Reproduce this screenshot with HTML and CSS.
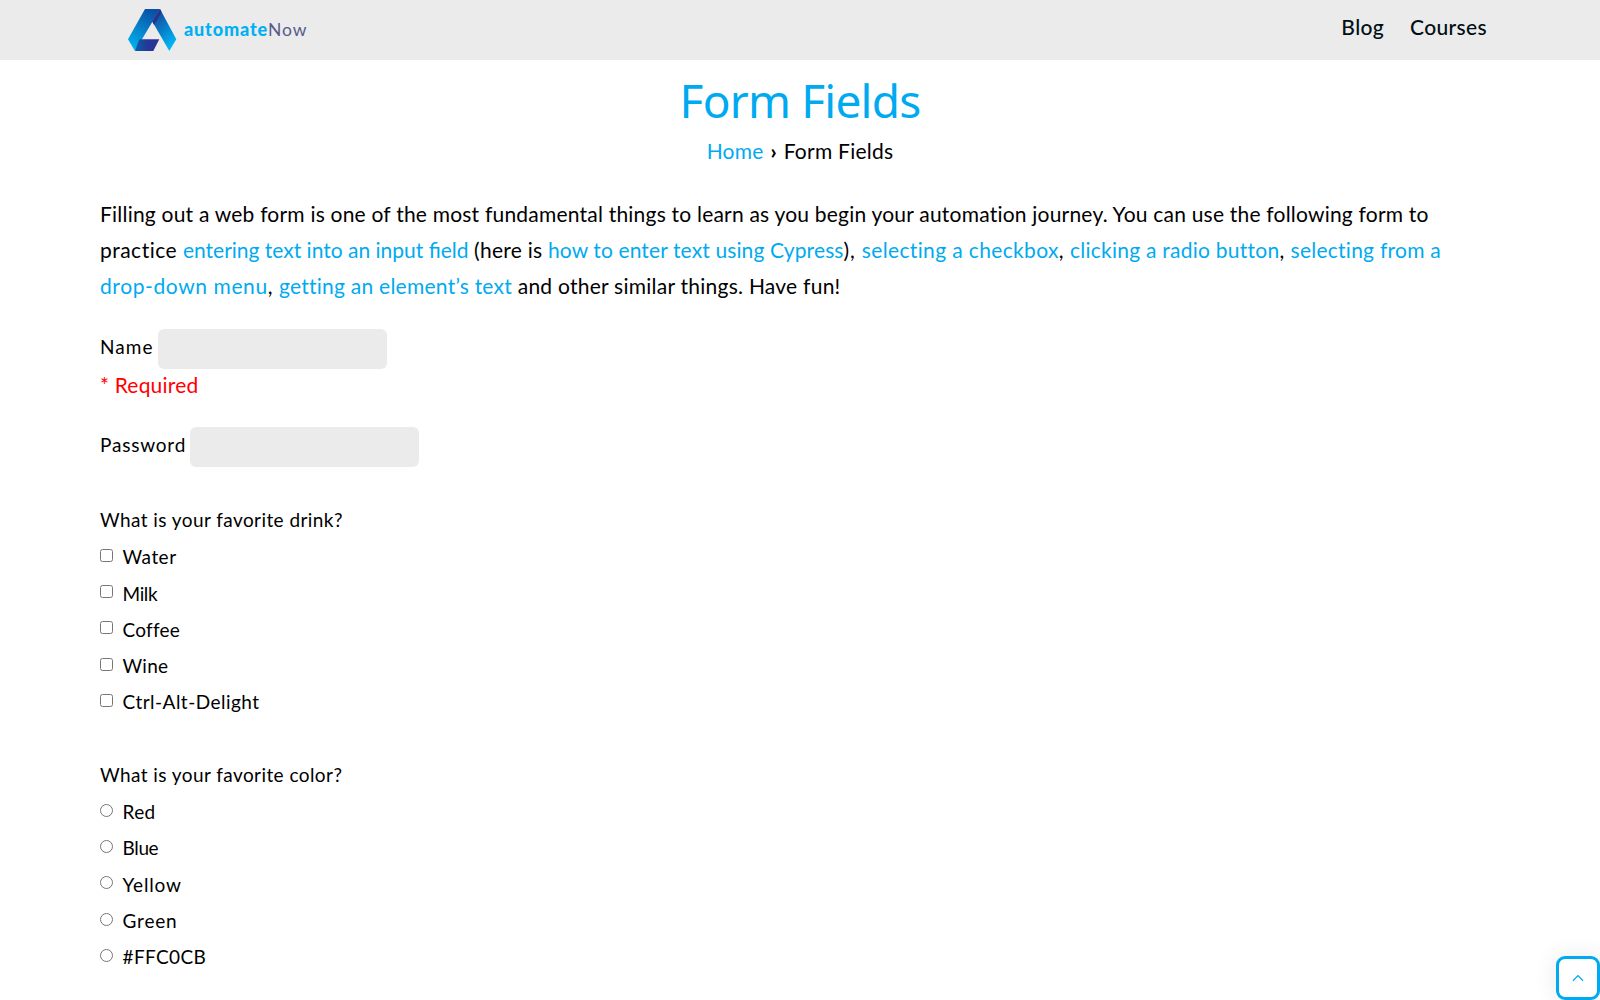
FILE: index.html
```
<!DOCTYPE html>
<html lang="en">
<head>
<meta charset="utf-8">
<title>Form Fields | automateNow</title>
<link rel="stylesheet" href="styles.css">
</head>
<body>
<header class="site-header">
  <a class="logo" href="#">
    <svg class="logo-mark" width="50" height="44" viewBox="0 0 50 44" aria-hidden="true">
      <defs>
        <linearGradient id="left" x1="0.7" y1="0" x2="0.2" y2="1"><stop offset="0" stop-color="#0b4fa3"/><stop offset="1" stop-color="#00b4f2"/></linearGradient>
        <linearGradient id="right" x1="0.2" y1="0" x2="0.7" y2="1"><stop offset="0" stop-color="#1c3f98"/><stop offset=".45" stop-color="#0878c4"/><stop offset="1" stop-color="#00bdfa"/></linearGradient>
        <linearGradient id="base" x1="0" y1="0" x2="1" y2="0"><stop offset="0" stop-color="#075fa9"/><stop offset=".5" stop-color="#24389a"/><stop offset="1" stop-color="#2b3291"/></linearGradient>
      </defs>
      <path fill="url(#right)" d="M33 1 49.3 31.3 42.3 43 25.3 13.5z"/>
      <path fill="url(#left)" d="M18 1H33L8 43 1 31.3z"/>
      <path fill="#26328c" d="M33 1 34.5 4 27 17 25.3 13.5z"/>
      <path fill="url(#base)" d="M12.3 31.3H32.3L26.3 43H8z"/>
    </svg>
    <span class="logo-bold">automate</span><span class="logo-light">Now</span>
  </a>
  <nav class="menu"><a href="#">Blog</a><a href="#">Courses</a></nav>
</header>
<main class="content">
  <h1 class="title">Form Fields</h1>
  <div class="breadcrumb"><a href="#">Home</a><b class="sep">›</b><span>Form Fields</span></div>
  <p class="intro"><span class="t2">Filling out a web form is one of the most fundamental things to learn as you begin your automation journey. You can use the following form to</span><br><span class="t5">practice </span><a class="t0" href="#">entering text into an input field</a><span class="t3"> (here is </span><a class="t1" href="#">how to enter text using Cypress</a><span class="t7">), </span><a class="t4" href="#">selecting a checkbox</a><span class="comma">, </span><a class="t3" href="#">clicking a radio button</a><span class="comma">, </span><a class="t3" href="#">selecting from a<br></a><a class="t6" href="#">drop-down menu</a><span class="comma">, </span><a class="t3" href="#">getting an element’s text</a><span class="t3"> and other similar things. Have fun!</span></p>
  <form>
    <div class="field"><label class="name-label" for="name">Name</label><input class="text-input" id="name" type="text"></div>
    <div class="required">* Required</div>
    <div class="field password"><label class="password-label" for="password">Password</label><input class="text-input" id="password" type="password"></div>
    <div class="group drinks">
      <div class="question">What is your favorite drink?</div>
      <label class="option t5"><input type="checkbox">Water</label>
      <label class="option tight"><input type="checkbox">Milk</label>
      <label class="option t3"><input type="checkbox">Coffee</label>
      <label class="option t3"><input type="checkbox">Wine</label>
      <label class="option t5"><input type="checkbox">Ctrl-Alt-Delight</label>
    </div>
    <div class="group colors">
      <div class="question">What is your favorite color?</div>
      <label class="option t4"><input type="radio" name="color">Red</label>
      <label class="option tight"><input type="radio" name="color">Blue</label>
      <label class="option t7"><input type="radio" name="color">Yellow</label>
      <label class="option t7"><input type="radio" name="color">Green</label>
      <label class="option t4"><input type="radio" name="color">#FFC0CB</label>
    </div>
  </form>
</main>
<a class="to-top" href="#" aria-label="Back to top"><svg width="12" height="8" viewBox="0 0 12 8"><path d="M1 6.8 6 1.6 11 6.8" fill="none" stroke="#00aaf0" stroke-width="1.3"/></svg></a>
</body>
</html>
```
FILE: styles.css
```
* { box-sizing: border-box; }
html { overflow: hidden; }
body {
  margin: 0;
  height: 1000px;
  overflow: hidden;
  background: #fff;
  color: #000;
  font: 21px/36px Lato, "Open Sans", sans-serif;
}
a { color: #00aaf0; text-decoration: none; }

.site-header {
  display: flex;
  justify-content: space-between;
  height: 60px;
  padding: 0 113px 0 127px;
  background: #ebebeb;
}
.logo { display: flex; padding-top: 8px; font-size: 18px; line-height: 43px; }
.logo-mark { flex: none; }
.logo-bold { margin-left: 7px; font-weight: 900; letter-spacing: .85px; color: #00b0f5; }
.logo-light { font-weight: 400; font-size: 17.5px; letter-spacing: 1px; color: #575b8c; }
.menu { display: flex; gap: 26px; padding-top: 9px; font-weight: 500; letter-spacing: .35px; }
.menu a { color: #000f14; }

.content { padding: 10px 100px 0; }
.title {
  margin: 0;
  font: 400 46px/60px "Noto Sans", sans-serif;
  letter-spacing: -.8px;
  text-align: center;
  color: #00aaf0;
}
.breadcrumb { display: flex; justify-content: center; margin-top: 3px; letter-spacing: .25px; }
.sep { width: 20px; text-align: center; font-weight: 900; }
.intro { margin: 27px 0 25px; white-space: nowrap; }

.t0 { letter-spacing: 0; }
.t1 { letter-spacing: .12px; }
.t2 { letter-spacing: .212px; }
.t3 { letter-spacing: .25px; }
.t4 { letter-spacing: .36px; }
.t5 { letter-spacing: .48px; }
.t6 { letter-spacing: .6px; }
.t7 { letter-spacing: .82px; }
.comma { letter-spacing: .5px; }
.tight { letter-spacing: -.35px; }

.field { display: flex; align-items: flex-start; height: 40px; font-size: 19px; line-height: 35px; }
.name-label { width: 58px; letter-spacing: 1.1px; }
.password-label { width: 90px; letter-spacing: .8px; }
.text-input { width: 229px; height: 40px; padding: 0 12px; border: 0; border-radius: 6px; background: #ebebeb; font: inherit; }
.required { height: 30px; line-height: 32px; letter-spacing: .2px; color: #f00; }
.password { margin-top: 28px; }

.group { font-size: 19px; line-height: 38px; }
.drinks { margin-top: 34px; }
.colors { margin-top: 37px; }
.question { height: 36.3px; letter-spacing: .43px; }
.option { display: flex; align-items: flex-start; gap: 9.5px; height: 36.3px; line-height: 39px; }
.option input { flex: none; width: 13px; height: 13px; margin: 11.6px 0 0; }

.to-top {
  position: fixed;
  right: 0;
  bottom: 0;
  display: flex;
  align-items: center;
  justify-content: center;
  width: 44px;
  height: 44px;
  border: 3px solid #00aaf0;
  border-radius: 9px;
  background: #fff;
  box-shadow: 0 0 24px rgba(0, 0, 0, .09);
}
```
